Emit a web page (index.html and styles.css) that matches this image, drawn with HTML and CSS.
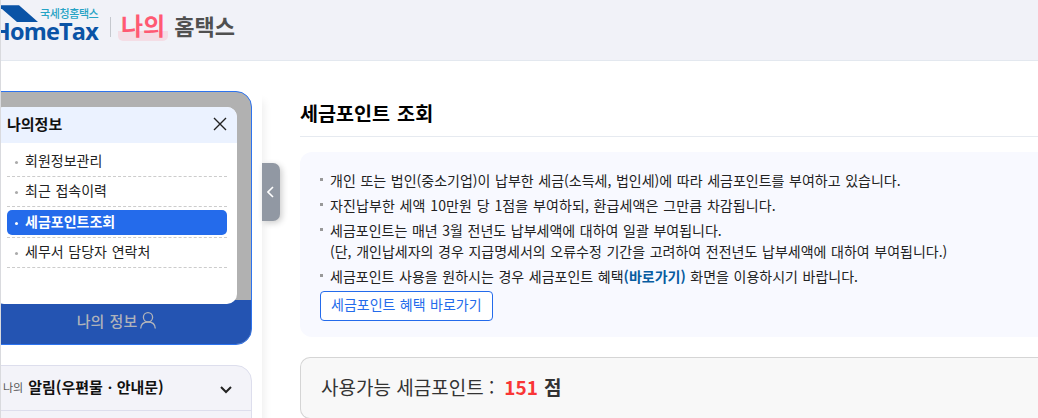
FILE: index.html
```html
<!DOCTYPE html>
<html lang="ko">

<head>
  <meta charset="UTF-8">
  <meta name="viewport" content="width=device-width, initial-scale=1.0">
  <title>세금포인트 조회 | 나의 홈택스</title>
  <link rel="stylesheet" href="styles.css">
</head>

<body>
  <header class="header">
    <div class="logo">
      <svg class="logo-mark" width="37" height="18" viewBox="0 0 37 18">
        <path d="M0 0.3H18L37 17H16L1 4H0Z" fill="#0a53a6" />
      </svg>
      <span class="logo-sub">국세청홈택스</span>
      <span class="logo-name">HomeTax</span>
    </div>
    <h1 class="site-title"><span class="my">나의</span> <span>홈택스</span></h1>
  </header>

  <div class="container">
    <aside class="sidebar">
      <div class="profile">
        <div class="menu">
          <div class="menu-head">
            <strong>나의정보</strong>
            <svg width="14" height="14" viewBox="0 0 14 14" fill="none" stroke="#222" stroke-width="1.4">
              <path d="M1 1L13 13M13 1L1 13" />
            </svg>
          </div>
          <ul class="menu-list">
            <li><a>회원정보관리</a></li>
            <li><a>최근 접속이력</a></li>
            <li><a class="active">세금포인트조회</a></li>
            <li><a>세무서 담당자 연락처</a></li>
          </ul>
        </div>
        <div class="profile-foot">
          <span>나의 정보</span>
          <svg width="16" height="17" viewBox="0 0 16 17" fill="none" stroke="#b0b3ba" stroke-width="1.3">
            <circle cx="8" cy="5.3" r="4.6" />
            <path d="M0.7 16.5C0.9 12.5 3.5 10 8 10S15.1 12.5 15.3 16.5" />
          </svg>
        </div>
      </div>

      <div class="notice">
        <div class="notice-head">
          <span class="small">나의</span>
          <strong>알림(우편물ㆍ안내문)</strong>
          <svg width="12" height="8" viewBox="0 0 12 8" fill="none" stroke="#222" stroke-width="2">
            <path d="M1 1L6 6L11 1" />
          </svg>
        </div>
      </div>

      <button type="button" class="toggle">
        <svg width="7" height="12" viewBox="0 0 7 12" fill="none" stroke="#fff" stroke-width="1.6">
          <path d="M6 1L1 6L6 11" />
        </svg>
      </button>
    </aside>

    <main class="content">
      <h2>세금포인트 조회</h2>
      <div class="guide">
        <ul>
          <li>개인 또는 법인(중소기업)이 납부한 세금(소득세, 법인세)에 따라 세금포인트를 부여하고 있습니다.</li>
          <li class="wide">자진납부한 세액 10만원 당 1점을 부여하되, 환급세액은 그만큼 차감됩니다.</li>
          <li>세금포인트는 매년 3월 전년도 납부세액에 대하여 일괄 부여됩니다.<br>(단, 개인납세자의 경우 지급명세서의 오류수정 기간을 고려하여 전전년도 납부세액에 대하여 부여됩니다.)</li>
          <li>세금포인트 사용을 원하시는 경우 세금포인트 혜택<a class="link">(바로가기)</a> 화면을 이용하시기 바랍니다.</li>
        </ul>
        <button type="button" class="btn">세금포인트 혜택 바로가기</button>
      </div>
      <div class="point">
        <span>사용가능 세금포인트 :</span>
        <strong class="num">151</strong>
        <strong>점</strong>
      </div>
    </main>
  </div>
</body>

</html>
```
FILE: styles.css
```css
* {
  box-sizing: border-box;
}

body {
  margin: 0;
  height: 418px;
  overflow: hidden;
  border-left: 1px solid #d9dade;
  background-color: #fff;
  color: #222;
  font-family: "Noto Sans CJK KR", sans-serif;
  font-size: 14px;
}

h1,
h2,
ul {
  margin: 0;
  padding: 0;
}

ul {
  list-style: none;
}

svg {
  display: block;
  flex-shrink: 0;
}

.header {
  display: flex;
  height: 61px;
  background-color: #f1f2f8;
  border-bottom: 1px solid #e3e8ef;
  white-space: nowrap;
}

.logo {
  display: grid;
  grid-template-columns: 37px 60px;
  grid-template-rows: 18px 19px;
  width: 97px;
  margin-top: 5px;
}

.logo-sub {
  padding-left: 2px;
  color: #26a3c5;
  font-size: 11px;
  font-weight: 500;
  line-height: 16px;
  letter-spacing: -0.4px;
}

.logo-name {
  grid-column: 1 / 3;
  justify-self: end;
  color: #0a53a6;
  font-family: "Open Sans", sans-serif;
  font-size: 23.5px;
  font-weight: 700;
  line-height: 17px;
  letter-spacing: -0.8px;
}

.site-title {
  display: flex;
  gap: 6px;
  height: 20px;
  margin: 17px 0 0 12px;
  padding-left: 7px;
  border-left: 1px solid #c5c8ce;
  color: #505050;
  font-size: 22px;
  line-height: 17px;
}

.my {
  height: 24px;
  padding: 0 3px;
  border-radius: 5px;
  background: linear-gradient(#f4dde5, #f4dde5) 0 14px / 100% 10px no-repeat;
  color: #ff5a73;
  font-size: 24px;
  line-height: 16px;
}

.container {
  display: flex;
  height: 357px;
  overflow: hidden;
}

.sidebar {
  position: relative;
  flex-shrink: 0;
  width: 261px;
  padding: 30px 10px 0 0;
  box-shadow: 2px 40px 8px rgba(0, 0, 0, 0.07);
}

.profile {
  height: 254px;
  margin-left: -20px;
  padding-top: 15px;
  overflow: hidden;
  border: 1px solid #2d73ee;
  border-radius: 16px;
  background-color: #b1b1b1;
}

.menu {
  position: relative;
  height: 197px;
  margin: 0 14px 0 12px;
  overflow: hidden;
  border-radius: 10px;
  background-color: #fff;
}

.menu-head {
  display: flex;
  align-items: center;
  justify-content: space-between;
  height: 36px;
  padding: 0 10px 3px 13px;
  background-color: #ebf2ff;
  color: #111;
  font-size: 15px;
}

.menu-list {
  padding: 3px 10px 0 13px;
}

.menu-list li {
  height: 30.6px;
  padding-top: 3px;
  border-bottom: 1px dashed #ccc;
}

.menu-list a {
  display: flex;
  align-items: center;
  height: 25px;
  padding: 0 0 4px 8px;
  border-radius: 5px;
  word-spacing: 0.8px;
}

.menu-list a::before {
  content: "";
  width: 3px;
  height: 3px;
  margin: 5px 7px 0 0;
  border-radius: 50%;
  background-color: #aaa;
}

.menu-list .active {
  padding-bottom: 3px;
  background-color: #246beb;
  color: #fff;
  font-weight: 700;
}

.menu-list .active::before {
  background-color: #fff;
}

.profile-foot {
  display: flex;
  gap: 3px;
  align-items: center;
  justify-content: center;
  height: 48px;
  margin-top: -4px;
  padding: 0 0 7px 0;
  background-color: #2454b2;
  color: #b0b3ba;
  font-size: 15px;
  font-weight: 500;
  word-spacing: 1px;
}

.notice {
  height: 80px;
  margin: 20px 0 0 -20px;
  border: 1px solid #dddeed;
  border-radius: 16px 16px 0 0;
  background-color: #f3f3f9;
}

.notice-head {
  display: flex;
  align-items: center;
  height: 45px;
  padding: 0 19px 3px 21px;
  border-bottom: 1px solid #dddeed;
  color: #111;
  font-size: 15px;
}

.notice-head svg {
  margin: 6px 0 0 auto;
}

.small {
  margin-right: 5px;
  color: #555;
  font-size: 11px;
}

/* sidebar open/close handle */
.toggle {
  position: absolute;
  top: 102px;
  left: 261px;
  display: flex;
  align-items: center;
  justify-content: center;
  width: 18px;
  height: 58px;
  padding: 0 2px 0 0;
  border: 0;
  border-radius: 0 7px 7px 0;
  background-color: #9198a3;
  box-shadow: 2px 2px 6px rgba(0, 0, 0, 0.2);
}

.content {
  flex: 1;
  min-width: 0;
  padding: 36px 0 0 38px;
  white-space: nowrap;
}

h2 {
  height: 40px;
  border-bottom: 1px solid #e6eaf0;
  color: #000;
  font-size: 19.6px;
  line-height: 31px;
  word-spacing: 1.5px;
}

.guide {
  height: 185px;
  margin-top: 15px;
  padding: 18px 20px 0;
  border-radius: 12px 0 0 12px;
  background-color: #f8f9ff;
}

.guide li {
  position: relative;
  margin-bottom: 4px;
  padding-left: 10px;
  line-height: 21px;
  word-spacing: 0.7px;
}

.guide .wide {
  letter-spacing: 0.1px;
}

.guide li::before {
  content: "";
  position: absolute;
  top: 8px;
  left: 0;
  width: 3px;
  height: 3px;
  background-color: #999;
}

.link {
  color: #075c9f;
  font-weight: 700;
}

.btn {
  display: block;
  height: 30px;
  margin-top: 2px;
  padding: 0 10px 4px;
  border: 1px solid #246beb;
  border-radius: 4px;
  background-color: #fff;
  color: #246beb;
  font-family: inherit;
  font-size: 14px;
  word-spacing: 0.5px;
}

.point {
  display: flex;
  align-items: center;
  height: 62px;
  margin-top: 20px;
  padding: 0 0 3px 20px;
  border: 1px solid #d5d5d5;
  border-right: 0;
  border-radius: 10px 0 0 10px;
  background-color: #f8f8f8;
  color: #333;
  font-size: 19px;
}

.num {
  margin: 0 6px 0 10px;
  color: #f93636;
}
```
